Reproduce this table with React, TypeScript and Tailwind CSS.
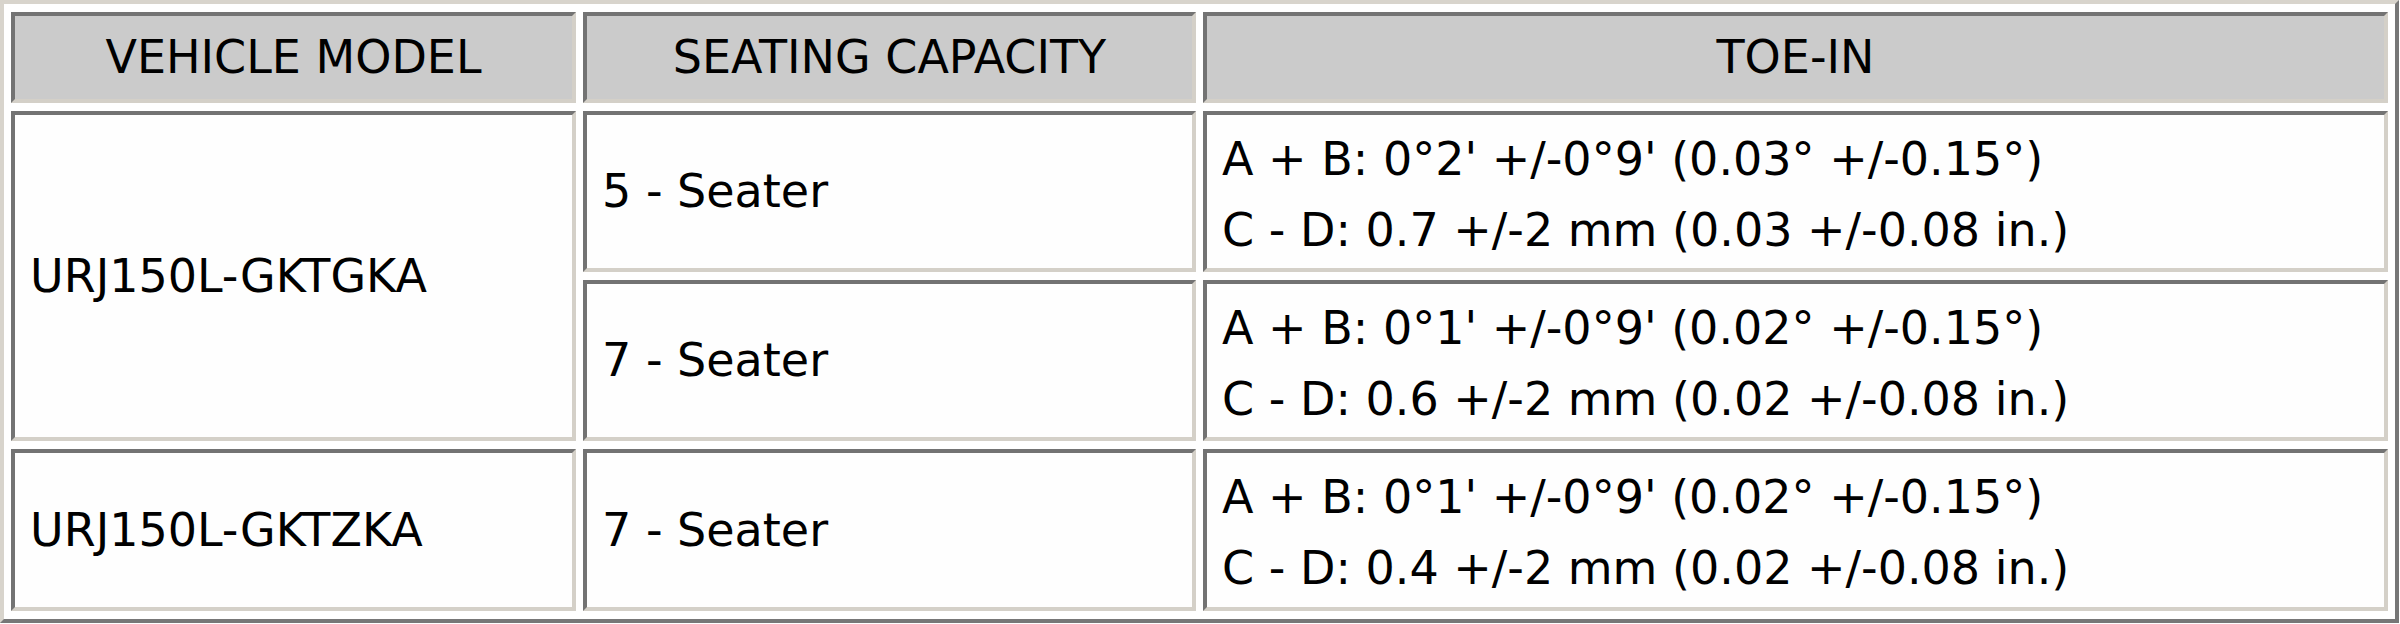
export default function App() {
  const cell =
    "border-[4px] border-t-[#737373] border-l-[#737373] border-r-[#d4d0c8] border-b-[#d4d0c8] p-0";
  const body = `${cell} bg-[#fefefe] text-left align-middle pl-[15px]`;
  const head = `${cell} bg-[#cbcbcb] text-center align-middle font-normal h-[91px]`;
  return (
    <div className="bg-white w-[2400px] h-[624px] font-['DejaVu_Sans',Verdana,sans-serif] text-[46px] text-black">
      <table className="table-fixed border-separate border-spacing-x-[7px] border-spacing-y-[8px] border-[4px] border-t-[#d8d4cc] border-l-[#d8d4cc] border-r-[#777777] border-b-[#777777] w-[2399px] bg-white">
        <thead>
          <tr>
            <th className={`${head} w-[565px]`}>VEHICLE MODEL</th>
            <th className={`${head} w-[613px]`}>SEATING CAPACITY</th>
            <th className={`${head} w-[1185px]`}>TOE-IN</th>
          </tr>
        </thead>
        <tbody>
          <tr>
            <td rowSpan={2} className={body}>
              URJ150L-GKTGKA
            </td>
            <td className={`${body} h-[161px]`}>5 - Seater</td>
            <td className={`${body} h-[161px]`}>
              <div className="leading-[71px] pt-[6px]">A + B: 0°2' +/-0°9' (0.03° +/-0.15°)</div>
              <div className="leading-[71px]">C - D: 0.7 +/-2 mm (0.03 +/-0.08 in.)</div>
            </td>
          </tr>
          <tr>
            <td className={`${body} h-[161px]`}>7 - Seater</td>
            <td className={`${body} h-[161px]`}>
              <div className="leading-[71px] pt-[6px]">A + B: 0°1' +/-0°9' (0.02° +/-0.15°)</div>
              <div className="leading-[71px]">C - D: 0.6 +/-2 mm (0.02 +/-0.08 in.)</div>
            </td>
          </tr>
          <tr>
            <td className={`${body} h-[162px]`}>URJ150L-GKTZKA</td>
            <td className={`${body} h-[162px]`}>7 - Seater</td>
            <td className={`${body} h-[162px]`}>
              <div className="leading-[71px] pt-[6px]">A + B: 0°1' +/-0°9' (0.02° +/-0.15°)</div>
              <div className="leading-[71px]">C - D: 0.4 +/-2 mm (0.02 +/-0.08 in.)</div>
            </td>
          </tr>
        </tbody>
      </table>
    </div>
  );
}
